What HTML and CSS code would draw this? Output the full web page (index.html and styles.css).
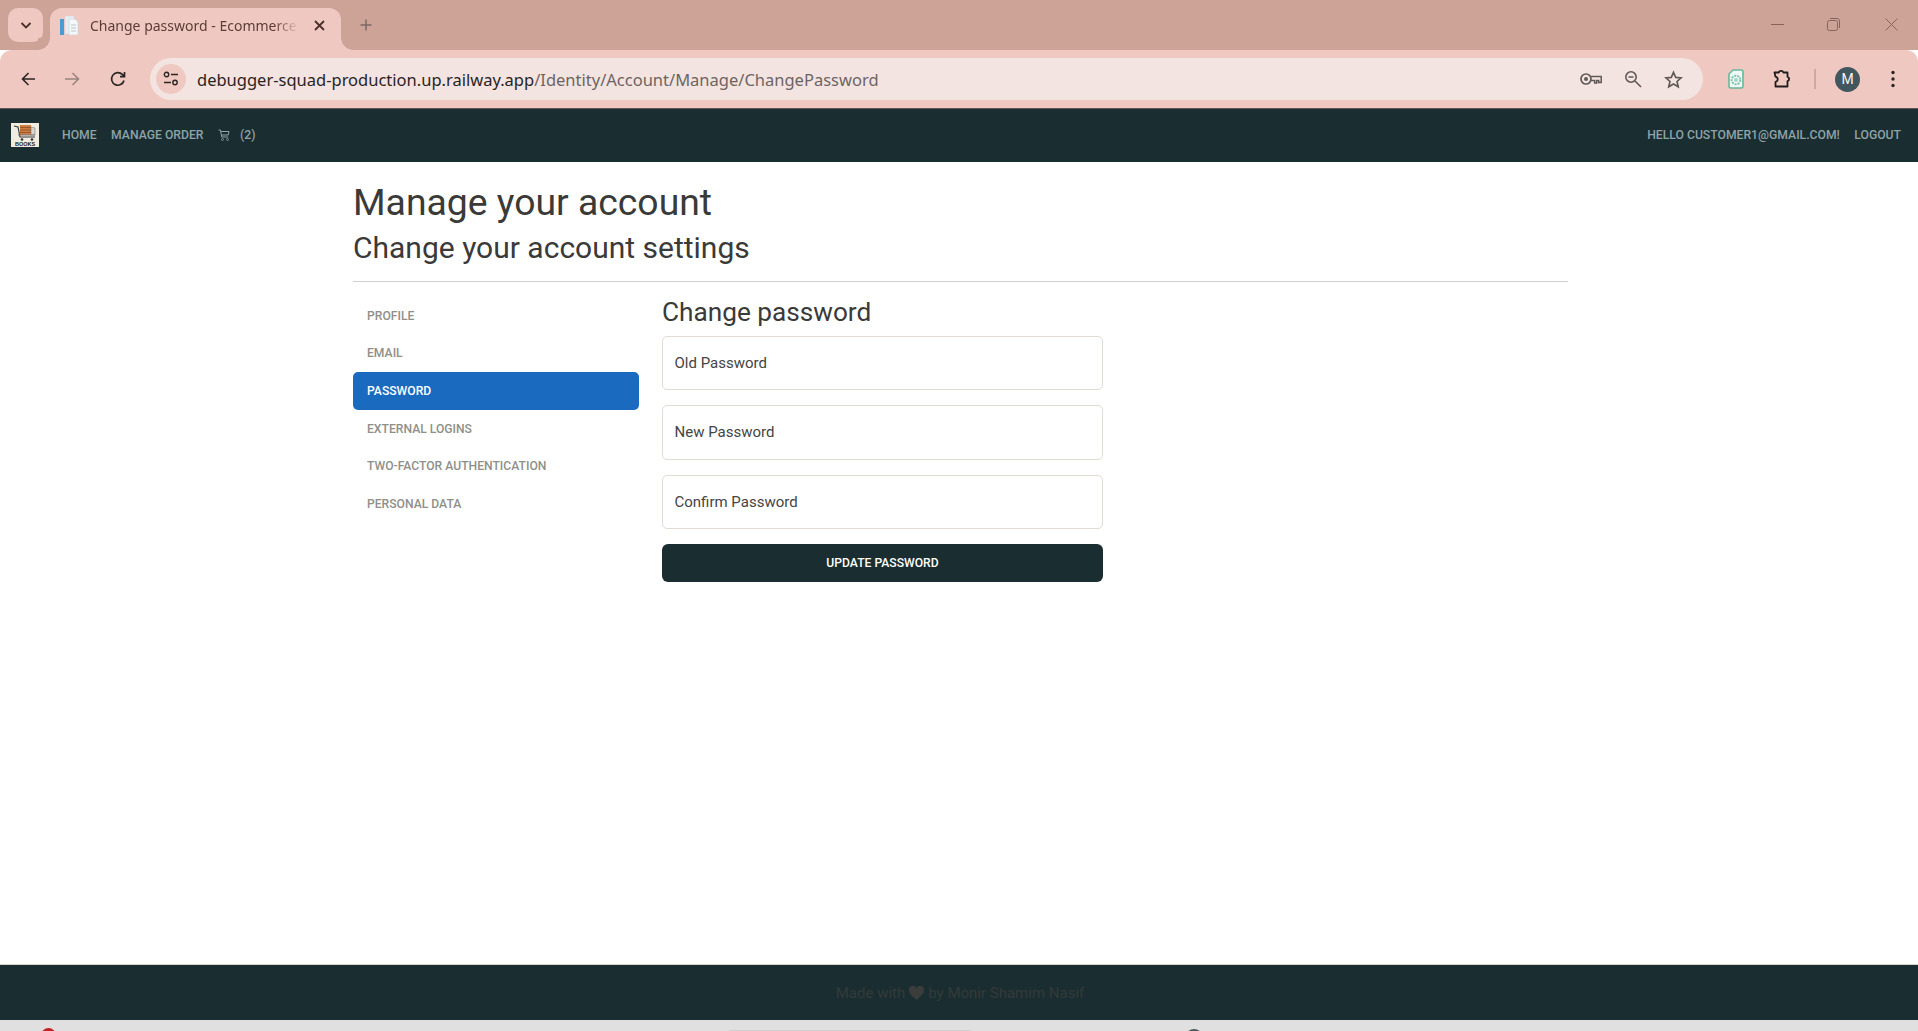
FILE: index.html
```html
<!DOCTYPE html>
<html lang="en">
<head>
<meta charset="utf-8">
<title>Change password - Ecommerce</title>
<link rel="stylesheet" href="styles.css">
</head>
<body>
<div class="screen">
  <div class="tabstrip">
    <div class="tabsearch"><svg width="14" height="14" viewBox="0 0 14 14"><path d="M2.500 5l4.500 4.500L11.500 5" fill="none" stroke="#4a2f2a" stroke-width="1.800"/></svg></div>
    <div class="tab">
      <svg class="favicon" width="19" height="19" viewBox="0 0 19 19"><rect x="5" y="0" width="9" height="18" fill="#e8edf2" stroke="#ccd4dc" stroke-width=".5"/><path d="M9 3h6l3 3v13H9z" fill="#f5f8fa" stroke="#c2ccd6" stroke-width=".6"/><rect x="0" y="3" width="4" height="16" fill="#4a9ad4"/><path d="M11 9h5M11 12h5M11 15h5" stroke="#bcc5ce"/></svg>
      <span class="tabtitle">Change password - Ecommerce</span>
      <svg class="tabclose" width="11" height="11" viewBox="0 0 11 11"><path d="M1 1l9 9M10 1l-9 9" stroke="#4a2f2a" stroke-width="1.800"/></svg>
    </div>
    <svg class="newtab" width="12" height="12" viewBox="0 0 12 12"><path d="M6 .5v11M.5 6h11" stroke="#7d6a65" stroke-width="1.500"/></svg>
    <div class="winctl">
      <svg width="13" height="13" viewBox="0 0 13 13"><path d="M0 6.500h13" stroke="#86645c"/></svg>
      <svg class="win-restore" width="13" height="13" viewBox="0 0 13 13"><rect x=".5" y="2.500" width="10" height="10" rx="2" fill="none" stroke="#86645c"/><path d="M3 .5h7a2.500 2.500 0 0 1 2.500 2.500v7" fill="none" stroke="#86645c"/></svg>
      <svg width="13" height="13" viewBox="0 0 13 13"><path d="M.5.500l12 12M12.500.500l-12 12" stroke="#86645c"/></svg>
    </div>
  </div>
  <div class="toolbar">
    <svg class="tb-back" width="14" height="14" viewBox="0 0 14 14"><path d="M14 7H1.500M7.500 1L1.500 7l6 6" fill="none" stroke="#2b2523" stroke-width="1.600"/></svg>
    <svg class="tb-fwd" width="15" height="14" viewBox="0 0 15 14"><path d="M0 7h13.500M7.500 1l6 6-6 6" fill="none" stroke="#9b8480" stroke-width="1.600"/></svg>
    <svg class="tb-reload" width="16" height="16" viewBox="0 0 16 16"><path d="M14 9.500A6.300 6.300 0 1 1 12.300 3.400L14.500 5.500M14.500 1v4.700H10" fill="none" stroke="#2b2523" stroke-width="1.700"/></svg>
    <div class="omnibox">
      <div class="siteinfo"><svg width="16" height="16" viewBox="0 0 16 16"><circle cx="3.500" cy="3.500" r="2.200" fill="none" stroke="#2b2523" stroke-width="1.400"/><path d="M8 3.500h7M1 11.500h7" stroke="#2b2523" stroke-width="1.400"/><circle cx="12" cy="11.500" r="2.200" fill="none" stroke="#2b2523" stroke-width="1.400"/></svg></div>
      <div class="url"><span class="host">debugger-squad-production.up.railway.app</span><span class="path">/Identity/Account/Manage/ChangePassword</span></div>
      <div class="omni-icons">
        <svg width="22" height="14" viewBox="0 0 22 14"><circle cx="6" cy="7" r="5" fill="none" stroke="#5f5957" stroke-width="1.700"/><circle cx="6" cy="7" r="2" fill="#5f5957"/><path d="M11 4.500h10.200v6h-2.500V8.500h-2V11h-2V8.500H11" fill="none" stroke="#5f5957" stroke-width="1.500"/></svg>
        <svg width="18" height="18" viewBox="0 0 18 18"><circle cx="7" cy="7" r="5.200" fill="none" stroke="#5f5957" stroke-width="1.600"/><path d="M4.500 7h5M11 11l6 6" stroke="#5f5957" stroke-width="1.600"/></svg>
        <svg width="19" height="19" viewBox="0 0 20 19"><path d="M10 2l2.300 5.300 5.700.500-4.300 3.800 1.300 5.600-5-3-5 3 1.300-5.600L2 7.800l5.700-.500z" fill="none" stroke="#5f5957" stroke-width="1.700"/></svg>
      </div>
    </div>
    <div class="tb-right">
      <svg class="ext-gpt" width="16" height="20" viewBox="0 0 16 20"><path d="M5 1h8a2 2 0 0 1 2 2v14a2 2 0 0 1-2 2H3a2 2 0 0 1-2-2V5z" fill="#f0f8f5" stroke="#66b89a" stroke-width="1.600"/><circle cx="8" cy="11" r="4.300" fill="none" stroke="#7cc4aa" stroke-width="2" stroke-dasharray="2 1"/><circle cx="8" cy="11" r="2" fill="#a5d6c3"/></svg>
      <svg class="ext-puzzle" width="20" height="20" viewBox="0 0 20 20"><path d="M1.500 3.500h4.300a2.400 2.400 0 0 1 4.600 0h4.100v4.300a2.300 2.300 0 0 1 0 4.400v5.300H2.500v-4.500a2.700 2.700 0 0 0 0-5.300z" fill="none" stroke="#211d1c" stroke-width="1.800" stroke-linejoin="round"/></svg>
      <div class="tb-sep"></div>
      <div class="avatar">M</div>
      <svg class="kebab" width="4" height="18" viewBox="0 0 4 18"><circle cx="2" cy="2.500" r="1.700" fill="#2b2523"/><circle cx="2" cy="9" r="1.700" fill="#2b2523"/><circle cx="2" cy="15.500" r="1.700" fill="#2b2523"/></svg>
    </div>
  </div>
  <nav class="navbar">
    <svg class="logo" width="28" height="24" viewBox="0 0 28 24"><rect width="28" height="24" fill="#f1ece0"/><rect x="9" y="2" width="11" height="10" fill="#cf7d42"/><path d="M9 4.500h11M9 7h11M9 9.500h11" stroke="#8a4f25" stroke-width=".8"/><path d="M20 4l4 1v7h-4z" fill="#d9d6cc" stroke="#666" stroke-width=".5"/><path d="M3 3l4 1 2 10h15" fill="none" stroke="#3a3a3a" stroke-width="1.200"/><path d="M7 12h17" stroke="#777"/><circle cx="11" cy="16.500" r="1.300" fill="#333"/><circle cx="21" cy="16.500" r="1.300" fill="#333"/><text class="logotext" x="14" y="23">BOOKS</text></svg>
    <a class="navlink">Home</a>
    <a class="navlink">Manage Order</a>
    <a class="navlink cart"><svg width="12" height="12" viewBox="0 0 12 12"><path d="M.5 1h2l1.200 7h6.500M3 2.500h8l-.7 3.500H3.400" fill="none" stroke="#8ea3a8"/><circle cx="4.500" cy="10.500" r="1" fill="none" stroke="#8ea3a8" stroke-width=".8"/><circle cx="9.500" cy="10.500" r="1" fill="none" stroke="#8ea3a8" stroke-width=".8"/></svg><span>(2)</span></a>
    <div class="nav-right">
      <a class="navlink">Hello customer1@gmail.com!</a>
      <a class="navlink">Logout</a>
    </div>
  </nav>
  <main class="main">
    <div class="container">
      <h1 class="title">Manage your account</h1>
      <h2 class="subtitle">Change your account settings</h2>
      <hr class="rule">
      <div class="columns">
        <ul class="sidenav">
          <li class="sidelink">Profile</li>
          <li class="sidelink">Email</li>
          <li class="sidelink active">Password</li>
          <li class="sidelink">External logins</li>
          <li class="sidelink">Two-factor authentication</li>
          <li class="sidelink">Personal data</li>
        </ul>
        <form class="form">
          <h3 class="formtitle">Change password</h3>
          <div class="field">Old Password</div>
          <div class="field">New Password</div>
          <div class="field">Confirm Password</div>
          <button type="button" class="submit">Update Password</button>
        </form>
      </div>
    </div>
  </main>
  <footer class="footer">
    <span>Made with</span>
    <svg width="15" height="14" viewBox="0 0 15 14"><path d="M7.500 14C3 10 0 7.500 0 4a3.800 3.800 0 0 1 7.500-1.200A3.800 3.800 0 0 1 15 4c0 3.500-3 6-7.500 10z" fill="#3a3d3b"/></svg>
    <span>by Monir Shamim Nasif</span>
  </footer>
  <div class="taskbar">
    <i class="tb-dot red"></i>
    <i class="tb-bar"></i>
    <i class="tb-dot slate"></i>
  </div>
</div>
</body>
</html>
```

FILE: styles.css
```css
* { box-sizing: border-box; }
html, body { margin: 0; padding: 0; }
body { font-family: Roboto, "Noto Sans", sans-serif; background: #fff; color: #333; }
.screen { width: 1918px; height: 1031px; display: flex; flex-direction: column; overflow: hidden; }

.tabstrip { height: 50px; flex: none; background: #cca396; display: flex; align-items: flex-start; padding-left: 8px; }
.tabsearch { width: 35px; height: 34px; margin-top: 8px; border-radius: 10px; background: #efc9c1; display: flex; align-items: center; justify-content: center; }
.tab { position: relative; width: 291px; height: 42px; margin-top: 8px; margin-left: 7px; background: #efc9c1; border-radius: 12px 12px 0 0; display: flex; align-items: center; padding: 0 16px 8px 10px; }
.tab::before, .tab::after { content: ""; position: absolute; bottom: 0; width: 12px; height: 12px; }
.tab::before { left: -12px; background: radial-gradient(circle at 0 0, #cca396 11.500px, #efc9c1 12px); }
.tab::after { right: -12px; background: radial-gradient(circle at 100% 0, #cca396 11.500px, #efc9c1 12px); }
.favicon { flex: none; }
.tabtitle { font: 400 14px "Noto Sans", sans-serif; color: #5a3d37; margin-left: 11px; width: 209px; overflow: hidden; white-space: nowrap; -webkit-mask-image: linear-gradient(90deg, #000 88%, transparent); mask-image: linear-gradient(90deg, #000 88%, transparent); }
.tabclose { margin-left: auto; flex: none; }
.newtab { margin: 19px 0 0 19px; }
.winctl { margin-left: auto; display: flex; gap: 43px; padding: 18px 20px 0 0; }
.win-restore { margin-right: 2px; }

.toolbar { height: 58px; flex: none; background: #efc9c1; border-radius: 12px 12px 0 0; display: flex; align-items: center; padding: 0 23px 0 21px; position: relative; }
.tb-back { margin-right: 30px; }
.tb-fwd { margin-right: 30px; }
.tb-reload { margin-right: 24px; }
.omnibox { flex: 1; height: 42px; border-radius: 21px; background: #f3e4e1; display: flex; align-items: center; padding: 0 20px 0 6px; }
.siteinfo { width: 30px; height: 30px; border-radius: 50%; background: #efc9c1; display: flex; align-items: center; justify-content: center; flex: none; }
.url { margin-left: 11px; font: 400 16.500px "Noto Sans", sans-serif; white-space: nowrap; }
.host { color: #2a2321; }
.path { color: #6d6462; }
.omni-icons { margin-left: auto; display: flex; align-items: center; gap: 22px; }
.tb-right { display: flex; align-items: center; margin-left: 25px; }
.ext-puzzle { margin-left: 29px; }
.tb-sep { width: 2px; height: 20px; background: #d4a79c; margin-left: 21px; }
.avatar { width: 25px; height: 25px; border-radius: 50%; background: #42565f; color: #f4f4f4; font: 400 14px Roboto, sans-serif; display: flex; align-items: center; justify-content: center; margin-left: 19px; }
.kebab { margin-left: 31px; }

.navbar { height: 54px; flex: none; background: #1a2e31; display: flex; align-items: center; padding: 0 17px 0 11px; box-shadow: inset 0 1px 0 #5b5553; }
.logo { flex: none; margin-right: 23px; }
.logotext { font: 700 5.500px "Liberation Sans", sans-serif; fill: #222; text-anchor: middle; }
.navlink { font-size: 12.200px; font-weight: 500; text-transform: uppercase; color: #8ea3a8; white-space: nowrap; }
.navlink + .navlink { margin-left: 14.500px; }
.cart { display: flex; align-items: center; gap: 7px; margin-left: 15px; }
.cart span { margin-left: 3px; }
.nav-right { margin-left: auto; display: flex; }

.main { flex: 1; background: #fff; min-height: 0; }
.container { width: 1215px; margin-left: 353px; padding-top: 16px; }
.title { margin: 0; font-size: 37.350px; font-weight: 400; line-height: 48px; color: #3a3a38; }
.subtitle { margin: 0; padding-top: 3px; font-size: 30px; font-weight: 400; line-height: 38px; color: #3a3a38; }
.rule { margin: 14px 0 0; border: 0; border-top: 1px solid #d0d0d0; }
.columns { display: flex; gap: 23px; padding-top: 15px; }
.sidenav { width: 286px; list-style: none; margin: 0; padding: 0; display: flex; flex-direction: column; }
.sidelink { height: 37.600px; padding: 0 14px; display: flex; align-items: center; font-size: 12.150px; font-weight: 500; text-transform: uppercase; color: #8f8f89; border-radius: 5px; }
.sidelink.active { background: #1a6bbf; color: #fff; }
.form { width: 441px; display: flex; flex-direction: column; }
.formtitle { margin: 0 0 9px; font-size: 26.200px; font-weight: 400; line-height: 30px; color: #3a3a38; }
.field { height: 54.300px; padding: 0 11.500px; margin-bottom: 15px; display: flex; align-items: center; border: 1px solid #e3dcd2; border-radius: 5px; font-size: 15px; color: #444; background: #fff; }
.submit { height: 38px; border: 0; border-radius: 6px; background: #1a2e31; color: #fff; font: 500 12.150px Roboto, sans-serif; text-transform: uppercase; }

.footer { height: 56px; flex: none; background: #1a2e31; border-top: 1px solid #d9d3c8; display: flex; align-items: center; justify-content: center; gap: 4px; padding-left: 2px; font-size: 15px; color: #343a39; }

.taskbar { height: 11px; flex: none; background: #e0e0e0; position: relative; overflow: hidden; }
.tb-dot { position: absolute; border-radius: 50%; }
.tb-dot.red { left: 41px; top: 8px; width: 15px; height: 15px; background: #c62020; }
.tb-dot.slate { left: 1185px; top: 9px; width: 18px; height: 18px; background: #4a5a60; }
.tb-bar { position: absolute; left: 728px; width: 244px; height: 6px; top: 10px; background: #cfcfcf; border-radius: 3px 3px 0 0; }
```
